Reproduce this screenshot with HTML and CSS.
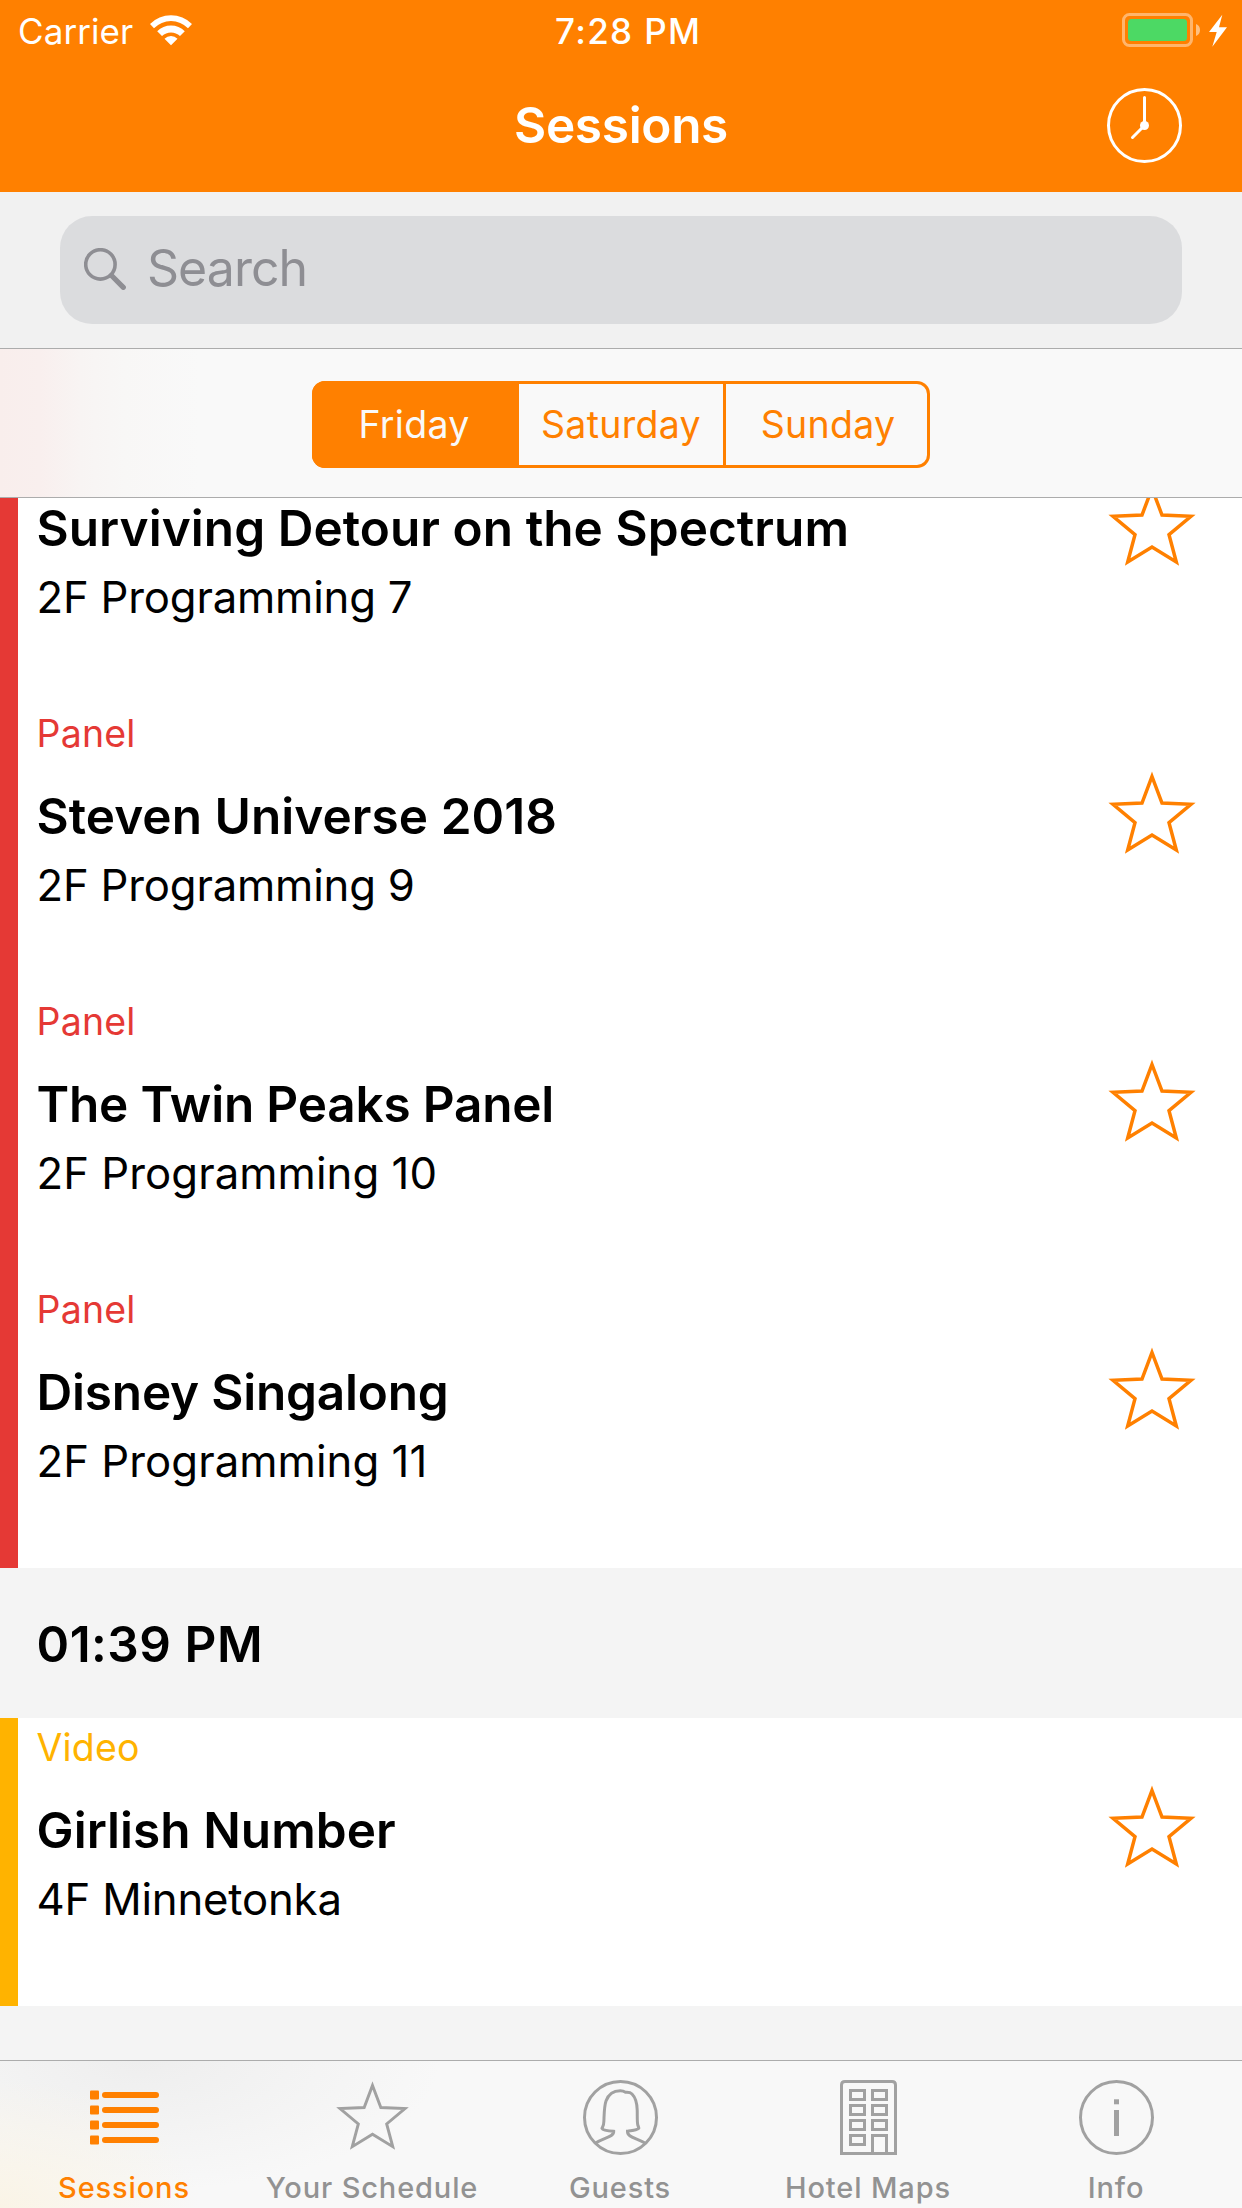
FILE: index.html
```html
<!DOCTYPE html>
<html lang="en">
<head>
<meta charset="utf-8">
<title>Sessions</title>
<link rel="stylesheet" href="styles.css">
</head>
<body>
<svg width="0" height="0" class="defs" aria-hidden="true">
  <symbol id="star" viewBox="0 0 90 90">
    <path d="M45 6.500 L55 33 L84 34.300 L62 52.700 L69.300 80 L45 65 L20.700 80 L28 52.700 L6 34.300 L35 33 Z" fill="none" stroke="currentColor" stroke-width="3.500"/>
  </symbol>
</svg>
<div class="app">
  <header class="header">
    <div class="status">
      <div class="status-left">
        <span class="carrier">Carrier</span>
        <svg class="wifi" width="42" height="31" viewBox="0 0 42 31">
          <path d="M0 9 A29.700 29.700 0 0 1 42 9 L38 13.200 A23.800 23.800 0 0 0 4 13.200 Z M7.200 16.200 A19.600 19.600 0 0 1 34.800 16.200 L30 21 A13 13 0 0 0 12 21 Z M14.500 23.700 A9.300 9.300 0 0 1 27.500 23.700 L21 30.200 Z" fill="#fff"/>
        </svg>
      </div>
      <span class="time">7:28 PM</span>
      <svg class="battery" width="105" height="34" viewBox="0 0 105 34">
        <rect x="1.500" y="1.500" width="68" height="31" rx="6" fill="none" stroke="#fff" stroke-opacity=".42" stroke-width="3"/>
        <rect x="6" y="6" width="59" height="22" rx="3.500" fill="#4cd964"/>
        <path d="M74 11 Q78 12.500 78 17 Q78 21.500 74 23 Z" fill="#fff" fill-opacity=".5"/>
        <path d="M100.300 1.700 L87 19 L94.700 19 L90.300 33.700 L105 14.300 L97 14.300 Z" fill="#fff"/>
      </svg>
    </div>
    <div class="nav">
      <h1 class="nav-title">Sessions</h1>
      <svg class="clock" width="75" height="75" viewBox="0 0 75 75" fill="none" stroke="#fff" stroke-width="3" stroke-linecap="round">
        <circle cx="37.500" cy="37.500" r="36"/>
        <path d="M37.500 9.500 V37.500 L25.500 49.500"/>
        <circle cx="37.500" cy="37.500" r="4.500" fill="#fff" stroke="none"/>
      </svg>
    </div>
  </header>

  <div class="search-bar">
    <div class="search-field">
      <svg width="42" height="42" viewBox="0 0 42 42" fill="none" stroke="#8e8e93">
        <circle cx="16.400" cy="16.400" r="14.700" stroke-width="3.600"/>
        <path d="M27.500 27.500 L39.300 39.300" stroke-width="5.200" stroke-linecap="round"/>
      </svg>
      <span class="search-text">Search</span>
    </div>
  </div>

  <div class="day-bar">
    <div class="segments">
      <div class="segment active">Friday</div>
      <div class="segment">Saturday</div>
      <div class="segment last">Sunday</div>
    </div>
  </div>

  <main class="list">
    <section class="group red">
      <article class="row continued">
        <div class="text">
          <h2 class="title">Surviving Detour on the Spectrum</h2>
          <p class="room">2F Programming 7</p>
        </div>
        <svg class="fav"><use href="#star"/></svg>
      </article>
      <article class="row">
        <div class="text">
          <p class="category">Panel</p>
          <h2 class="title">Steven Universe 2018</h2>
          <p class="room">2F Programming 9</p>
        </div>
        <svg class="fav"><use href="#star"/></svg>
      </article>
      <article class="row">
        <div class="text">
          <p class="category">Panel</p>
          <h2 class="title tight">The Twin Peaks Panel</h2>
          <p class="room wide">2F Programming 10</p>
        </div>
        <svg class="fav"><use href="#star"/></svg>
      </article>
      <article class="row">
        <div class="text">
          <p class="category">Panel</p>
          <h2 class="title tight">Disney Singalong</h2>
          <p class="room wide">2F Programming 11</p>
        </div>
        <svg class="fav"><use href="#star"/></svg>
      </article>
    </section>
    <h2 class="slot">01:39 PM</h2>
    <section class="group amber">
      <article class="row">
        <div class="text">
          <p class="category">Video</p>
          <h2 class="title">Girlish Number</h2>
          <p class="room">4F Minnetonka</p>
        </div>
        <svg class="fav"><use href="#star"/></svg>
      </article>
    </section>
  </main>

  <nav class="tabs">
    <div class="tab selected">
      <svg class="tab-icon" viewBox="0 0 75 75" fill="currentColor">
        <rect x="3" y="10.500" width="9" height="9" rx="1"/><rect x="15" y="12" width="57" height="6" rx="3"/>
        <rect x="3" y="25.500" width="9" height="9" rx="1"/><rect x="15" y="27" width="57" height="6" rx="3"/>
        <rect x="3" y="40.500" width="9" height="9" rx="1"/><rect x="15" y="42" width="57" height="6" rx="3"/>
        <rect x="3" y="55.500" width="9" height="9" rx="1"/><rect x="15" y="57" width="57" height="6" rx="3"/>
      </svg>
      <span class="tab-label">Sessions</span>
    </div>
    <div class="tab">
      <svg class="tab-icon"><use href="#star"/></svg>
      <span class="tab-label">Your Schedule</span>
    </div>
    <div class="tab">
      <svg class="tab-icon" viewBox="0 0 75 75" fill="none" stroke="currentColor" stroke-width="3">
        <circle cx="37.500" cy="37.500" r="36"/>
        <path d="M12.700 63 C21 57.500 31 57 30.700 51.300 C26 51 20 50.500 19 48.300 C19.500 46.500 20.700 47 20.900 41 C21.200 33 21.200 26 23 21 C25.500 14 30.500 10.700 37.300 10.700 C40 10.700 41 11.200 42.500 12.200 C45 12.400 47 12 49 14 C53 18 54 23 54.200 30 C54.400 37 54 42 54.800 45 C55.200 46.500 56 47.500 55.800 48.300 C54 50.300 49 50.700 44.500 51.200 C44.300 57.200 52.500 57.500 62 63"/>
      </svg>
      <span class="tab-label">Guests</span>
    </div>
    <div class="tab">
      <svg class="tab-icon" viewBox="0 0 75 75" fill="none" stroke="currentColor" stroke-width="3">
        <path d="M10.500 73.500 V5 Q10.500 1.500 14 1.500 H61 Q64.500 1.500 64.500 5 V73.500 Z"/>
        <path d="M19.500 10.500 h14 v9 h-14 Z M41.500 10.500 h14 v9 h-14 Z M19.500 25.500 h14 v9 h-14 Z M41.500 25.500 h14 v9 h-14 Z M19.500 40.500 h14 v9 h-14 Z M41.500 40.500 h14 v9 h-14 Z M19.500 55.500 h14 v9 h-14 Z M41.500 73.500 v-18 h14 v18"/>
      </svg>
      <span class="tab-label">Hotel Maps</span>
    </div>
    <div class="tab">
      <svg class="tab-icon" viewBox="0 0 75 75">
        <circle cx="37.500" cy="37.500" r="36" fill="none" stroke="currentColor" stroke-width="3"/>
        <rect x="35" y="19.300" width="5" height="5" fill="currentColor"/>
        <rect x="35" y="30" width="5" height="26" fill="currentColor"/>
      </svg>
      <span class="tab-label">Info</span>
    </div>
  </nav>
</div>
</body>
</html>
```

FILE: styles.css
```css
* { box-sizing: border-box; margin: 0; padding: 0; }

body {
  width: 1242px;
  height: 2208px;
  overflow: hidden;
  font-family: Inter, "Liberation Sans", sans-serif;
  color: #000;
}

svg { display: block; flex: none; }
.defs { position: absolute; }

.app {
  display: flex;
  flex-direction: column;
  width: 1242px;
  height: 2208px;
  background: #f4f4f4;
}

/* Header */
.header { background: #ff8000; color: #fff; height: 192px; }

.status {
  display: grid;
  grid-template-columns: 537px auto 1fr;
  align-items: center;
  height: 60px;
  padding: 0 15px 0 18px;
}
.status-left { display: flex; align-items: center; gap: 17px; }
.carrier { font-size: 35px; line-height: 40px; letter-spacing: 0.08px; padding-top: 2px; }
.time { font-size: 35px; line-height: 40px; font-weight: 500; letter-spacing: 1.36px; padding-top: 2px; }
.battery { justify-self: end; }

.nav {
  display: grid;
  grid-template-columns: 1fr auto 1fr;
  align-items: center;
  height: 132px;
  padding: 0 60px 2px;
}
.nav-title {
  grid-column: 2;
  font-size: 49.5px;
  line-height: 60px;
  font-weight: 600;
  letter-spacing: -0.3px;
}
.clock { justify-self: end; }

/* Search */
.search-bar {
  height: 157px;
  padding: 24px 60px;
  background: #f1f1f1;
  border-bottom: 1px solid #acacac;
}
.search-field {
  display: flex;
  align-items: center;
  gap: 21px;
  height: 108px;
  padding: 0 24px 2px;
  border-radius: 32px;
  background: #dbdcde;
}
.search-text {
  font-size: 50px;
  line-height: 60px;
  letter-spacing: -0.97px;
  color: #8e8e93;
  padding-bottom: 2px;
}

/* Day picker */
.day-bar {
  display: flex;
  justify-content: center;
  height: 149px;
  padding-top: 32px;
  background: linear-gradient(90deg, #f9eeec 0, #f9efee 40px, #f8f4f3 80px, #f8f7f6 125px, #f9f9f9 200px);
  border-bottom: 1px solid #acacac;
}
.segments {
  display: grid;
  grid-template-columns: 207px 207px 1fr;
  width: 618px;
  height: 87px;
  border-radius: 13px;
  overflow: hidden;
  background: #ff8000;
}
.segment {
  display: flex;
  align-items: center;
  justify-content: center;
  margin: 3px 3px 3px 0;
  background: #f9f9f9;
  color: #ff8000;
  font-size: 37.5px;
  letter-spacing: 0.3px;
}
.segment.active { margin: 0; padding-right: 3px; background: #ff8000; color: #f9f9f9; }
.segment.last { padding-left: 3px; border-radius: 0 10px 10px 0; }

/* Session list */
.list { flex: 1; min-height: 0; overflow: hidden; }
.group { background: #fff; border-left: 18px solid; }
.red { border-color: #e53935; }
.red .category { color: #e53935; }
.amber { border-color: #ffb300; }
.amber .category { color: #ffb300; }

.row {
  display: flex;
  justify-content: space-between;
  height: 288px;
  padding: 7px 45px 0 18.5px;
}
.category { font-size: 37.5px; line-height: 46px; letter-spacing: 0.2px; margin-bottom: 29px; }
.title { font-size: 49.5px; line-height: 60px; font-weight: 600; letter-spacing: 0.05px; margin-bottom: 13px; }
.title.tight { letter-spacing: -0.2px; }
.room { font-size: 43.7px; line-height: 54px; letter-spacing: -0.2px; }
.room.wide { letter-spacing: 0.05px; }
.fav { width: 90px; height: 90px; margin-top: 59px; color: #ff8000; }
.row.continued { height: 206px; padding-top: 0; }
.row.continued .fav { margin-top: -16px; }

.slot {
  height: 150px;
  padding: 46px 36.5px 0;
  font-size: 49.5px;
  line-height: 60px;
  font-weight: 600;
  letter-spacing: 0.5px;
}

/* Tab bar */
.tabs {
  display: grid;
  grid-template-columns: repeat(5, 1fr);
  height: 148px;
  padding: 19px 2px 0 0;
  border-top: 1px solid #acacac;
  background:
    radial-gradient(ellipse 200px 130px at 0 100%, #faf4e6 0, rgba(250, 244, 230, 0) 100%),
    radial-gradient(ellipse 300px 130px at 140px 0, #eeeeee 0, rgba(238, 238, 238, 0) 100%),
    #f8f8f8;
}
.tab {
  display: flex;
  flex-direction: column;
  align-items: center;
  gap: 15px;
  color: #a1a1a1;
}
.tab-icon { width: 75px; height: 75px; }
.tab-label {
  font-size: 29px;
  line-height: 36px;
  font-weight: 500;
  letter-spacing: 0.87px;
  color: #929292;
  white-space: nowrap;
}
.tab.selected, .tab.selected .tab-label { color: #ff8000; }
```
